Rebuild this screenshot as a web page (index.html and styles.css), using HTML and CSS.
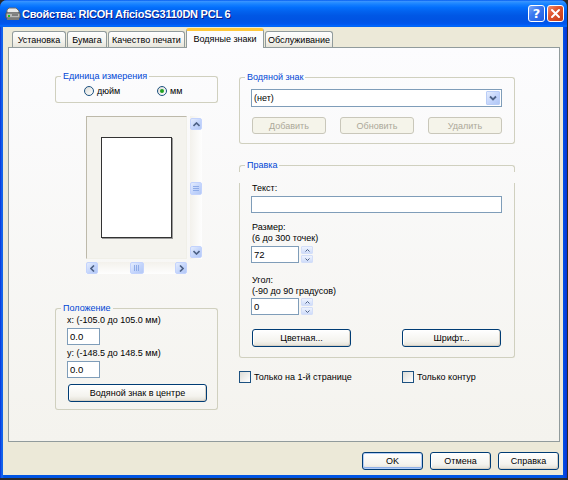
FILE: index.html
```html
<!DOCTYPE html>
<html lang="ru">
<head>
<meta charset="utf-8">
<title>Свойства</title>
<link rel="stylesheet" href="styles.css">
</head>
<body>
<div class="window">
  <div class="titlebar">
    <svg class="app-icon" width="16" height="14" viewBox="0 0 16 14">
      <path d="M4 1h7l3 3v2H2V3z" fill="#e8e8e8" stroke="#6d6d6d" stroke-width="1"/>
      <path d="M1 6h14v5H1z" fill="#b9b9b9" stroke="#555" stroke-width="1"/>
      <path d="M2 11h12v2H2z" fill="#7a7a7a"/>
      <rect x="3" y="8" width="2" height="2" fill="#19c41b"/>
      <path d="M7 8h6" stroke="#444" stroke-width="1"/>
    </svg>
    <span class="title">Свойства: RICOH AficioSG3110DN PCL 6</span>
    <div class="caption-btns">
      <span class="cbtn help">?</span>
      <span class="cbtn close"><svg width="11" height="11" viewBox="0 0 11 11"><path d="M2 2l7 7M9 2l-7 7" stroke="#fff" stroke-width="2" stroke-linecap="round"/></svg></span>
    </div>
  </div>
  <div class="client">
    <div class="tabs">
      <span class="tab t1">Установка</span>
      <span class="tab t2">Бумага</span>
      <span class="tab t3">Качество печати</span>
      <span class="tab t4 active">Водяные знаки</span>
      <span class="tab t5">Обслуживание</span>
    </div>
    <div class="panel">
      <div class="col-left">
        <div class="group units">
          <div class="ghead"><span>Единица измерения</span></div>
          <div class="gbody">
            <div class="radio-row">
              <label class="opt"><span class="radio"></span>дюйм</label>
              <label class="opt"><span class="radio checked"></span>мм</label>
            </div>
          </div>
        </div>
        <div class="preview">
          <div class="view"><div class="page"></div></div>
          <div class="vscroll">
            <span class="sbtn"><svg width="7" height="5" viewBox="0 0 7 5"><path d="M0.5 4L3.5 1L6.5 4" fill="none" stroke="#4d6185" stroke-width="1.6"/></svg></span>
            <span class="thumb vthumb"><i></i><i></i><i></i></span>
            <span class="sbtn"><svg width="7" height="5" viewBox="0 0 7 5"><path d="M0.5 1L3.5 4L6.5 1" fill="none" stroke="#4d6185" stroke-width="1.6"/></svg></span>
          </div>
          <div class="hscroll">
            <span class="sbtn"><svg width="5" height="7" viewBox="0 0 5 7"><path d="M4 0.5L1 3.5L4 6.5" fill="none" stroke="#4d6185" stroke-width="1.6"/></svg></span>
            <span class="thumb hthumb"><i></i><i></i><i></i></span>
            <span class="sbtn"><svg width="5" height="7" viewBox="0 0 5 7"><path d="M1 0.5L4 3.5L1 6.5" fill="none" stroke="#4d6185" stroke-width="1.6"/></svg></span>
          </div>
        </div>
        <div class="group position">
          <div class="ghead"><span>Положение</span></div>
          <div class="gbody">
            <div class="line">x: (-105.0 до 105.0 мм)</div>
            <div class="field small">0.0</div>
            <div class="line gap3">y: (-148.5 до 148.5 мм)</div>
            <div class="field small">0.0</div>
            <span class="btn center-btn">Водяной знак в центре</span>
          </div>
        </div>
      </div>
      <div class="col-right">
        <div class="group wm">
          <div class="ghead"><span>Водяной знак</span></div>
          <div class="gbody">
            <div class="select"><span>(нет)</span><span class="drop"><svg width="8" height="6" viewBox="0 0 8 6"><path d="M1 1.5L4 4.5L7 1.5" fill="none" stroke="#4d6185" stroke-width="1.8"/></svg></span></div>
            <div class="btn-row">
              <span class="btn disabled">Добавить</span>
              <span class="btn disabled">Обновить</span>
              <span class="btn disabled">Удалить</span>
            </div>
          </div>
        </div>
        <div class="group edit">
          <div class="ghead"><span>Правка</span></div>
          <div class="gbody">
            <div class="line first">Текст:</div>
            <div class="field wide"></div>
            <div class="line gap9">Размер:</div>
            <div class="line">(6 до 300 точек)</div>
            <div class="spin-row">
              <div class="field num">72</div>
              <div class="spin"><span><svg width="5" height="3" viewBox="0 0 5 3"><path d="M0.5 2.5L2.5 0.5L4.5 2.5" fill="none" stroke="#4d6185"/></svg></span><span><svg width="5" height="3" viewBox="0 0 5 3"><path d="M0.5 0.5L2.5 2.5L4.5 0.5" fill="none" stroke="#4d6185"/></svg></span></div>
            </div>
            <div class="line gap12">Угол:</div>
            <div class="line">(-90 до 90 градусов)</div>
            <div class="spin-row tight">
              <div class="field num">0</div>
              <div class="spin"><span><svg width="5" height="3" viewBox="0 0 5 3"><path d="M0.5 2.5L2.5 0.5L4.5 2.5" fill="none" stroke="#4d6185"/></svg></span><span><svg width="5" height="3" viewBox="0 0 5 3"><path d="M0.5 0.5L2.5 2.5L4.5 0.5" fill="none" stroke="#4d6185"/></svg></span></div>
            </div>
            <div class="btn-row two">
              <span class="btn">Цветная...</span>
              <span class="btn">Шрифт...</span>
            </div>
          </div>
        </div>
        <div class="checks">
          <label class="opt"><span class="check"></span>Только на 1-й странице</label>
          <label class="opt"><span class="check"></span>Только контур</label>
        </div>
      </div>
    </div>
    <div class="footer">
      <span class="btn default">OK</span>
      <span class="btn">Отмена</span>
      <span class="btn">Справка</span>
    </div>
  </div>
</div>
</body>
</html>
```

FILE: styles.css
```css
* { box-sizing: border-box; }

body {
  margin: 0;
  width: 568px;
  height: 480px;
  overflow: hidden;
  background: #2a2a2a;
  font-family: "Liberation Sans", Arial, sans-serif;
  font-size: 9px;
  color: #000;
}

.window {
  width: 567px;
  height: 478px;
  background: linear-gradient(90deg, #0831d9 0, #166aee 2px, #0054e3 4px, #0054e3 calc(100% - 4px), #0831d9 100%);
  border-radius: 7px 7px 0 0;
  display: flex;
  flex-direction: column;
}

.titlebar {
  height: 27px;
  display: flex;
  align-items: center;
  padding: 0 3px 0 5px;
  border-radius: 7px 7px 0 0;
  background: linear-gradient(180deg, #0058ee 0%, #3a93ff 5%, #288eff 9%, #127dff 18%, #036ffc 28%, #0262ee 42%, #0057e5 58%, #0054e3 72%, #0055eb 86%, #005bf5 92%, #026afe 96%, #0062ef 100%);
}

.app-icon { flex: none; margin-top: 1px; }

.title {
  margin-left: 1px;
  color: #fff;
  font-weight: bold;
  font-size: 11px;
  letter-spacing: -0.25px;
  text-shadow: 1px 1px 0 #0a1883;
  white-space: nowrap;
}

.caption-btns {
  margin-left: auto;
  display: flex;
  gap: 2px;
  margin-top: -1px;
}

.cbtn {
  width: 17px;
  height: 17px;
  border: 1px solid #fff;
  border-radius: 3px;
  display: flex;
  align-items: center;
  justify-content: center;
  color: #fff;
  font-weight: bold;
  font-size: 13px;
  font-family: "DejaVu Sans", sans-serif;
}

.help { background: linear-gradient(135deg, #7ea8f8 0%, #3b79f0 40%, #1f5ce0 100%); }
.close { background: linear-gradient(135deg, #f08c70 0%, #e0552f 40%, #c33b16 100%); }

.client {
  flex: 1;
  margin: 0 4px 3px 3px;
  background: #ece9d8;
  display: flex;
  flex-direction: column;
  padding-top: 1px;
}

.tabs {
  height: 19px;
  margin-left: 9px;
  display: flex;
  align-items: flex-end;
  gap: 1px;
  position: relative;
  z-index: 1;
}

.tab {
  height: 16px;
  border: 1px solid #919b9c;
  border-bottom: none;
  border-radius: 3px 3px 0 0;
  background: linear-gradient(#fefefe, #f4f3ee 60%, #e6e4da);
  line-height: 16px;
  text-align: center;
  white-space: nowrap;
  color: #000;
}

.t1 { width: 54px; }
.t2 { width: 40px; }
.t3 { width: 77px; }
.t4 { width: 78px; }
.t5 { width: 68px; }

.tab.active {
  height: 20px;
  margin-bottom: -1px;
  background: #fcfcfe;
  border-top: 3px solid #ffc83c;
  line-height: 16px;
}

.panel {
  margin-left: 5px;
  width: 552px;
  height: 395px;
  border: 1px solid #919b9c;
  background: linear-gradient(#fcfcfe, #f4f3ee);
  display: flex;
  gap: 21px;
  padding: 22px 0 0 46px;
}

.col-left { width: 163px; display: flex; flex-direction: column; }
.col-right { width: 276px; display: flex; flex-direction: column; }

/* group box */
.ghead {
  display: flex;
  height: 13px;
}

.ghead::before,
.ghead::after {
  content: "";
  margin-top: 6px;
  border-top: 1px solid #d0d0bf;
}

.ghead::before {
  width: 5px;
  border-left: 1px solid #d0d0bf;
  border-top-left-radius: 3px;
}

.ghead::after {
  flex: 1;
  border-right: 1px solid #d0d0bf;
  border-top-right-radius: 3px;
}

.ghead span {
  padding: 0 2px;
  line-height: 13px;
  color: #0046d5;
  white-space: nowrap;
}

.gbody {
  border: 1px solid #d0d0bf;
  border-top: none;
  border-radius: 0 0 3px 3px;
}

.units .gbody { padding: 2px 0 6px 28px; }

.radio-row {
  display: grid;
  grid-template-columns: 73px auto;
  height: 11px;
  align-items: center;
}

.opt { display: flex; align-items: center; gap: 3px; white-space: nowrap; }

.radio {
  width: 10px;
  height: 10px;
  border: 1px solid #1c5180;
  border-radius: 50%;
  background: linear-gradient(135deg, #dcdcd7, #fff);
  display: flex;
  align-items: center;
  justify-content: center;
}

.radio.checked::after {
  content: "";
  width: 4px;
  height: 4px;
  border-radius: 50%;
  background: #21a121;
}

.preview {
  margin: 13px 0 0 31px;
  display: grid;
  grid-template-columns: 101px 12px;
  grid-template-rows: 143px 12px;
  column-gap: 3px;
  row-gap: 3px;
}

.view {
  border: 1px solid #d6d2c2;
  border-color: #bdb9aa #f0efe8 #f0efe8 #bdb9aa;
  background: #f4f3ee;
  padding: 20px 0 0 14px;
}

.page {
  width: 71px;
  height: 101px;
  background: #fff;
  border: 1px solid #333;
  box-shadow: 1px 1px 0 #9b9b9b;
}

.vscroll, .hscroll {
  display: flex;
  justify-content: space-between;
  align-items: center;
  background: linear-gradient(90deg, #f3f1ec, #fefefe);
}

.vscroll { flex-direction: column; padding: 2px 0 1px; }
.hscroll { background: linear-gradient(#f3f1ec, #fefefe); }

.sbtn, .thumb {
  width: 12px;
  height: 12px;
  border: 1px solid #c3d3fd;
  border-radius: 2px;
  background: linear-gradient(135deg, #e4ecfd, #c1d3fb 60%, #b3c8f5);
  display: flex;
  align-items: center;
  justify-content: center;
}

.vthumb { height: 13px; flex-direction: column; gap: 1px; }
.vthumb i { display: block; width: 6px; height: 1px; background: #8eabe7; }
.hthumb { width: 14px; gap: 1px; }
.hthumb i { display: block; width: 1px; height: 6px; background: #8eabe7; }

.position { margin-top: 28px; }
.position .gbody { padding: 0 0 7px 11px; }

.line { line-height: 11px; height: 11px; white-space: nowrap; }
.gap3 { margin-top: 3px; }

.field {
  height: 17px;
  border: 1px solid #7f9db9;
  background: #fff;
  padding-left: 2px;
  line-height: 15px;
  margin-top: 2px;
  font-size: 9.5px;
}

.small { width: 33px; }

.btn {
  display: flex;
  align-items: center;
  justify-content: center;
  height: 18px;
  border: 1px solid #003c74;
  border-radius: 3px;
  background: linear-gradient(#ffffff, #f4f3ee 70%, #e3e0d6);
  box-shadow: inset -1px -1px 0 #d6d0c5, inset 1px 1px 0 #fff;
  white-space: nowrap;
}

.btn.disabled {
  border-color: #c9c7ba;
  background: #f5f4ea;
  box-shadow: none;
  color: #aca899;
}

.btn.default { box-shadow: inset 0 0 0 1px #b4cdf5, inset 0 -1px 0 1px #8fb0e9; }

.center-btn { width: 139px; margin: 6px 0 0 1px; }

.wm { margin-top: 1px; }
.wm .gbody { padding: 5px 0 9px 11px; }

.select {
  width: 251px;
  height: 18px;
  border: 1px solid #7f9db9;
  background: #fff;
  display: flex;
  align-items: center;
  justify-content: space-between;
  padding: 1px;
}

.select span:first-child { padding-left: 1px; }

.drop {
  width: 14px;
  height: 14px;
  border: 1px solid #b9cdf7;
  border-radius: 1px;
  background: linear-gradient(135deg, #e4ecfd, #c1d3fb 60%, #b1c7f5);
  display: flex;
  align-items: center;
  justify-content: center;
}

.btn-row {
  display: flex;
  gap: 14px;
  margin: 10px 0 0 1px;
}

.btn-row .btn { width: 74px; height: 17px; }

.edit { margin-top: 15px; }
.edit .gbody { padding: 0 0 10px 11px; }
.first { margin-top: 11px; }
.gap9 { margin-top: 9px; }
.gap12 { margin-top: 12px; }
.edit .line { padding-left: 1px; }

.wide { width: 251px; }

.spin-row { display: flex; gap: 2px; margin-top: 2px; }
.spin-row.tight { margin-top: 1px; }
.spin-row .field { margin-top: 0; }
.num { width: 48px; }

.spin {
  width: 12px;
  height: 17px;
  display: flex;
  flex-direction: column;
  gap: 1px;
}

.spin span {
  flex: 1;
  border: 1px solid #d3def8;
  border-radius: 1px;
  background: linear-gradient(#eef3fe, #cfdcf9);
  display: flex;
  align-items: center;
  justify-content: center;
}

.btn-row.two { margin-top: 14px; gap: 51px; }
.btn-row.two .btn { width: 99px; height: 18px; }

.checks {
  margin-top: 13px;
  display: grid;
  grid-template-columns: 163px auto;
}

.check {
  width: 12px;
  height: 12px;
  border: 1px solid #1c5180;
  background: linear-gradient(135deg, #dcdcd7, #fff);
}

.footer {
  margin-top: 10px;
  display: flex;
  justify-content: flex-end;
  gap: 7px;
  padding-right: 4px;
}

.footer .btn { width: 61px; }
```
